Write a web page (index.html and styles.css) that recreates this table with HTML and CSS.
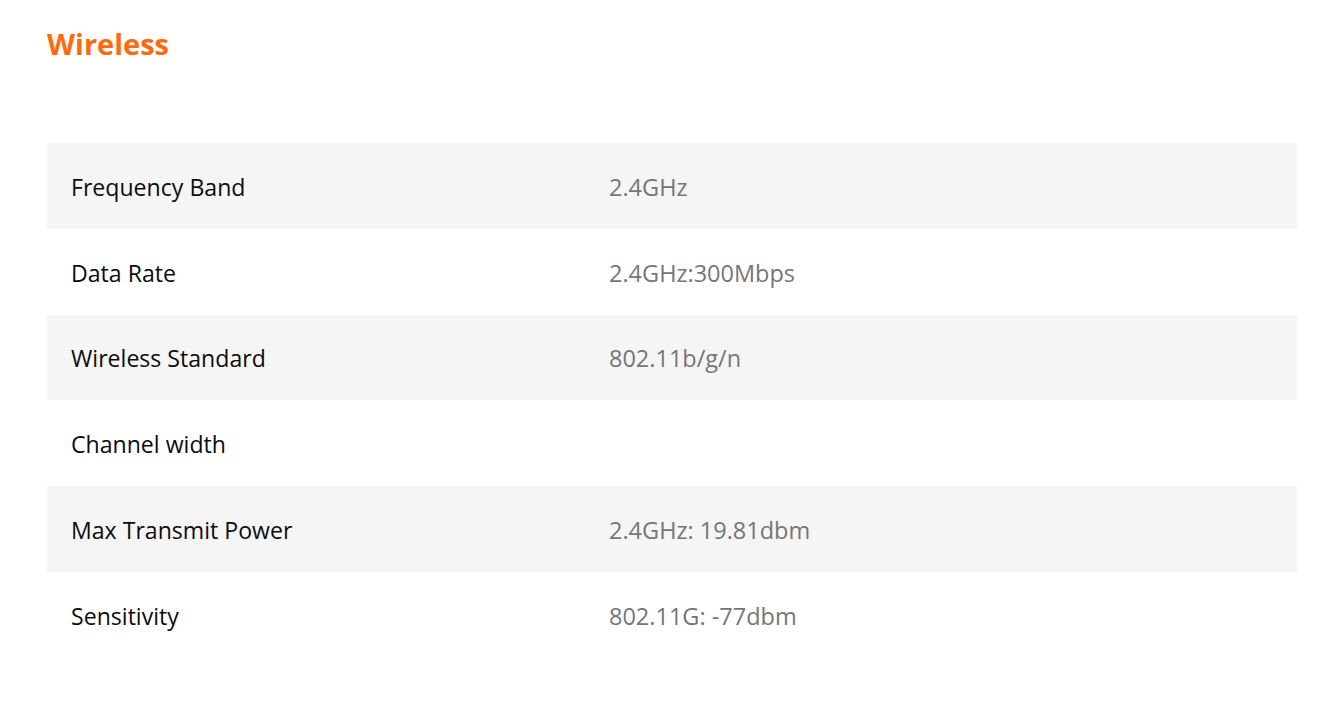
FILE: index.html
```html
<!DOCTYPE html>
<html>
<head>
<meta charset="utf-8">
<link rel="stylesheet" href="styles.css">
</head>
<body>
<section class="spec">
  <h2 class="spec-title">Wireless</h2>
  <div class="spec-table">
    <div class="row"><div class="label">Frequency Band</div><div class="value">2.4GHz</div></div>
    <div class="row"><div class="label">Data Rate</div><div class="value">2.4GHz:300Mbps</div></div>
    <div class="row"><div class="label">Wireless Standard</div><div class="value">802.11b/g/n</div></div>
    <div class="row"><div class="label">Channel width</div><div class="value"></div></div>
    <div class="row"><div class="label">Max Transmit Power</div><div class="value">2.4GHz: 19.81dbm</div></div>
    <div class="row"><div class="label">Sensitivity</div><div class="value">802.11G: -77dbm</div></div>
  </div>
</section>
</body>
</html>
```
FILE: styles.css
```css
html, body {
  margin: 0;
  padding: 0;
  background: #fff;
}
body {
  font-family: "Open Sans", "Noto Sans", sans-serif;
}
.spec {
  padding: 23px 34px 0 47px;
}
.spec-title {
  margin: 0;
  font-size: 29px;
  line-height: 42px;
  font-weight: 700;
  color: #ff6a0d;
}
.spec-table {
  margin-top: 78px;
  display: flex;
  flex-direction: column;
}
.row {
  display: grid;
  grid-template-columns: 538px 1fr;
  height: 85.8px;
  align-items: center;
}
.row:nth-child(odd) {
  background: #f5f5f5;
}
.label, .value {
  padding-left: 24px;
  font-size: 23.5px;
  line-height: 30px;
  padding-top: 2px;
}
.label {
  color: #0d0d0d;
  font-size: 23.1px;
}
.value {
  color: #767676;
}
```
